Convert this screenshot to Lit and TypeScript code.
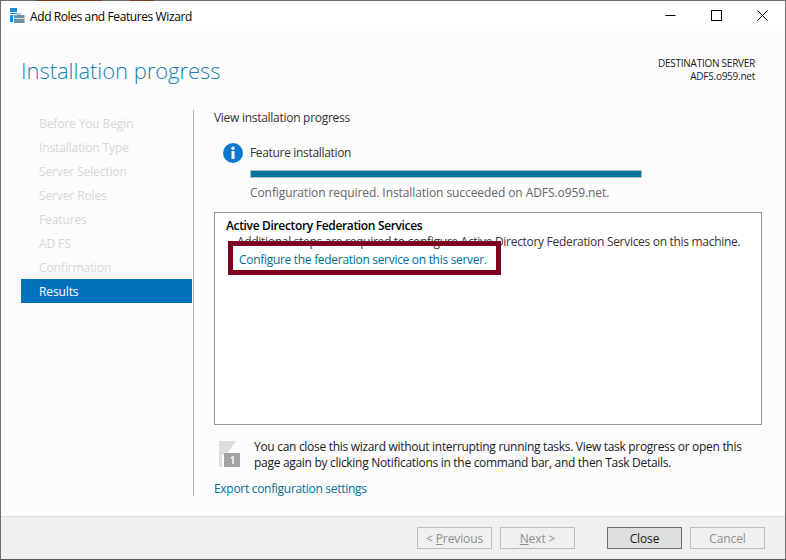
import { LitElement, html, css } from "lit";
import { customElement } from "lit/decorators.js";

const STEPS = ["Before You Begin", "Installation Type", "Server Selection", "Server Roles", "Features", "AD FS", "Confirmation"];

@customElement("app-root")
export class AppRoot extends LitElement {
  static styles = css`
    :host { display: block; width: 786px; height: 560px; overflow: hidden; font-family: "Open Sans", "Noto Sans", sans-serif; font-size: 12px; letter-spacing: -0.12px; color: #1a1a1a; }
    * { box-sizing: border-box; }
    .window { position: relative; width: 786px; height: 560px; display: flex; flex-direction: column; background: #fcfcfc; border: 1px solid #6e6e6e; border-bottom-color: #555; }
    .edge { position: absolute; left: -1px; top: -1px; width: 786px; height: 1px; background: linear-gradient(90deg, transparent 37px, #7a3a20 37px, #7a3a20 102px, transparent 102px, transparent 130px, #7a3a20 130px, #7a3a20 142px, transparent 142px, transparent 143px, #7a3a20 143px, #7a3a20 154px, transparent 154px); }
    .titlebar { height: 30px; flex: none; background: #fff; display: flex; align-items: center; padding-left: 9px; }
    .app-icon { width: 16px; height: 16px; margin-right: 4px; flex: none; }
    .title { font-size: 12px; color: #000; letter-spacing: -0.4px; }
    .controls { margin-left: auto; display: flex; align-self: flex-start; }
    .ctl { width: 46px; height: 29px; display: flex; align-items: center; justify-content: center; }
    .main { flex: 1; display: flex; flex-direction: column; min-height: 0; }
    .header { height: 79px; flex: none; display: flex; justify-content: space-between; padding: 23px 30px 0 20px; }
    .h1 { font-size: 22px; font-weight: 300; color: #1783ab; letter-spacing: -0.05px; line-height: 32px; }
    .dest { text-align: right; font-size: 10px; line-height: 13px; padding-top: 3px; letter-spacing: -0.25px; color: #1a1a1a; }
    .body { flex: 1; display: flex; min-height: 0; padding-left: 20px; padding-bottom: 20px; }
    .nav { width: 173px; flex: none; border-right: 1px solid #b4b4b4; padding-top: 1px; padding-right: 1px; height: 386px; }
    .step { height: 24px; line-height: 24px; padding: 1px 0 0 18px; color: #d6d6d6; }
    .step.on { background: #0072bc; color: #fff; }
    .content { flex: 1; min-width: 0; padding: 0 23px 0 20px; display: flex; flex-direction: column; height: 386px; }
    .content > * { flex: none; }
    .lead { line-height: 16px; color: #333; letter-spacing: -0.28px; }
    .status { display: grid; grid-template-columns: 36px 392px; margin: 17px 0 0 0; }
    .info { width: 20px; height: 20px; margin-left: 9px; }
    .feat { line-height: 16px; padding-top: 2px; color: #333; letter-spacing: -0.33px; }
    .bar { grid-column: 2; height: 8px; margin-top: 7px; background: #00759b; border: 1px solid #b8bfc2; }
    .msg { grid-column: 2; margin-top: 7px; line-height: 16px; color: #666; letter-spacing: -0.08px; }
    .box { margin-top: 11px; height: 213px; background: #fff; border: 1px solid #9a9a9a; padding: 5px 11px 4px; }
    .box h3 { margin: 0; font-size: 12px; font-weight: 600; line-height: 16px; color: #000; letter-spacing: -0.34px; }
    .box p { margin: 0 0 0 11px; line-height: 16px; color: #333; letter-spacing: -0.3px; white-space: nowrap; }
    a { color: #006f94; text-decoration: none; letter-spacing: -0.3px; }
    .box a { display: block; margin: 2px 0 0 13px; line-height: 16px; }
    .note { display: flex; height: 32px; margin-top: 14px; }
    .flag { width: 26px; height: 28px; margin: 1px 9px 0 5px; flex: none; }
    .note div { line-height: 16px; color: #1a1a1a; width: 510px; letter-spacing: -0.3px; }
    .export { margin-top: 10px; line-height: 16px; }
    .footer { height: 43px; flex: none; background: #f0f0f0; border-top: 1px solid #dcdcdc; display: flex; padding: 10px 20px 0 416px; }
    .btn { width: 75px; height: 22px; line-height: 20px; padding-top: 1px; text-align: center; background: #f0f0f0; border: 1px solid #bdbdbd; color: #8d8d8d; margin-right: 8px; }
    .btn.wide { margin-right: 32px; }
    .btn.close { background: #dedede; border-color: #6d6d6d; color: #1a1a1a; }
    .btn:last-child { margin-right: 0; }
    u { text-underline-offset: 1px; }
    .callout { position: absolute; left: 227px; top: 240px; width: 273px; height: 34px; border: 5px solid #7f0021; }
  `;

  render() {
    return html`
      <div class="window">
        <div class="edge"></div>
        <div class="titlebar">
          <svg class="app-icon" viewBox="0 0 16 16">
            <rect x="0" y="0" width="7" height="4" fill="#1b8fd9"/>
            <rect x="0" y="5" width="7" height="1" fill="#1b8fd9"/>
            <rect x="0" y="7" width="3" height="7" fill="#1b8fd9"/>
            <path d="M4 7h3V5.5h4V7h3.5v8H4z" fill="#6e8ea3"/>
            <path d="M4 10.5h10.5" stroke="#d5e0e8" stroke-width="1"/>
            <path d="M7.5 7V6h3v1" fill="none" stroke="#fff" stroke-width="0.6"/>
          </svg>
          <span class="title">Add Roles and Features Wizard</span>
          <div class="controls">
            <div class="ctl"><svg width="11" height="11" viewBox="0 0 11 11"><path d="M0.5 5.5h10" stroke="#000"/></svg></div>
            <div class="ctl"><svg width="11" height="11" viewBox="0 0 11 11"><rect x="0.5" y="0.5" width="10" height="10" fill="none" stroke="#000"/></svg></div>
            <div class="ctl"><svg width="11" height="11" viewBox="0 0 11 11"><path d="M0.5 0.5l10 10M10.5 0.5l-10 10" stroke="#000"/></svg></div>
          </div>
        </div>
        <div class="main">
          <div class="header">
            <div class="h1">Installation progress</div>
            <div class="dest">DESTINATION SERVER<br />ADFS.o959.net</div>
          </div>
          <div class="body">
            <div class="nav">
              ${STEPS.map((s) => html`<div class="step">${s}</div>`)}
              <div class="step on">Results</div>
            </div>
            <div class="content">
              <div class="lead">View installation progress</div>
              <div class="status">
                <svg class="info" viewBox="0 0 20 20">
                  <circle cx="10" cy="10" r="10" fill="#0b78d0"/>
                  <rect x="8.5" y="8" width="3" height="8" fill="#fff"/>
                  <circle cx="10" cy="5.3" r="1.7" fill="#fff"/>
                </svg>
                <div class="feat">Feature installation</div>
                <div class="bar"></div>
                <div class="msg">Configuration required. Installation succeeded on ADFS.o959.net.</div>
              </div>
              <div class="box">
                <h3>Active Directory Federation Services</h3>
                <p>Additional steps are required to configure Active Directory Federation Services on this machine.</p>
                <a>Configure the federation service on this server.</a>
              </div>
              <div class="note">
                <svg class="flag" viewBox="0 0 26 28">
                  <rect x="0" y="1" width="3" height="26" fill="#dedede"/>
                  <path d="M3 1h14L7 15H3z" fill="#dedede"/>
                  <rect x="5" y="13" width="16" height="14" fill="#a3a3a3"/>
                  <path d="M12 18l2-1v7" stroke="#fff" stroke-width="1.4" fill="none"/>
                </svg>
                <div>You can close this wizard without interrupting running tasks. View task progress or open this page again by clicking Notifications in the command bar, and then Task Details.</div>
              </div>
              <a class="export">Export configuration settings</a>
            </div>
          </div>
        </div>
        <div class="footer">
          <div class="btn">&lt; <u>P</u>revious</div>
          <div class="btn wide"><u>N</u>ext &gt;</div>
          <div class="btn close">Close</div>
          <div class="btn">Cancel</div>
        </div>
        <div class="callout"></div>
      </div>
    `;
  }
}
